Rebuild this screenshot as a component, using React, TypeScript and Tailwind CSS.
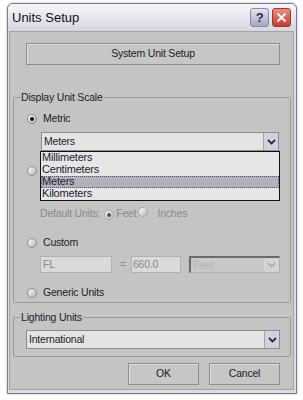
import React from 'react';

function Radio({ checked = false, disabled = false }: { checked?: boolean; disabled?: boolean }) {
  return (
    <span
      className={`inline-flex w-[10px] h-[10px] shrink-0 items-center justify-center rounded-full border bg-gradient-to-br from-white to-[#b4b4b4] ${
        disabled ? 'border-[#a8a8a8]' : 'border-[#8a8a8a]'
      }`}
    >
      {checked && <span className={`w-[4px] h-[4px] rounded-full ${disabled ? 'bg-[#555]' : 'bg-[#111]'}`} />}
    </span>
  );
}

function Chevron({ color = '#2a2a3a' }: { color?: string }) {
  return (
    <svg width="9" height="6" viewBox="0 0 9 6">
      <path d="M1 1 L4.5 4.5 L8 1" stroke={color} strokeWidth="1.8" fill="none" />
    </svg>
  );
}

function Select({ value }: { value: string }) {
  return (
    <div className="flex h-full border border-[#8c8c8c] bg-[#e4e4e4]">
      <span className="flex-1 pl-[2px] leading-[17px] text-[#1c1c28]">{value}</span>
      <span className="w-[15px] flex items-center justify-center border-l border-[#a4a4a4] bg-[#d2d2de]">
        <Chevron />
      </span>
    </div>
  );
}

function Button({ label, className }: { label: string; className: string }) {
  return (
    <div
      className={`h-[22px] flex items-center justify-center border border-[#8e8e8e] bg-[#c6c6c6] shadow-[inset_1px_1px_0_#dedede] text-[#1c1c28] ${className}`}
    >
      {label}
    </div>
  );
}

const itemsList = ['Millimeters', 'Centimeters', 'Meters', 'Kilometers'];

export default function App() {
  return (
    <div className="w-[303px] h-[400px] bg-white pt-[3px] pl-[7px] font-['Liberation_Sans',Arial,sans-serif] text-[10.5px] tracking-[-0.2px]">
      <div className="w-[290px] h-[391px] flex flex-col rounded-t-[6px] border border-[#7c7c86] bg-[#dcdce4] shadow-[0_0_2px_#9a9a9a]">
        {/* title bar */}
        <div className="h-[27px] flex items-center pl-[4px] pr-[5px] rounded-t-[5px] bg-gradient-to-b from-[#f6f6fa] to-[#d6d6e2]">
          <span className="flex-1 text-[13px] tracking-normal text-[#101010]">Units Setup</span>
          <div className="w-[19px] h-[19px] flex items-center justify-center rounded-[3px] border border-[#8a8aa0] bg-gradient-to-b from-[#e4e4f2] to-[#a6a6c4] text-[13px] font-bold text-[#2a2a40]">
            ?
          </div>
          <div className="ml-[3px] w-[19px] h-[19px] flex items-center justify-center rounded-[3px] border border-[#9a3a30] bg-gradient-to-b from-[#ee8a78] to-[#c83c2a]">
            <svg width="11" height="11" viewBox="0 0 11 11">
              <path d="M1.5 1.5 L9.5 9.5 M9.5 1.5 L1.5 9.5" stroke="#fff" strokeWidth="2" />
            </svg>
          </div>
        </div>

        {/* client */}
        <div className="ml-[1px] mr-[2px] mb-[3px] flex-1 flex flex-col border border-[#a4a4a4] bg-[#c4c4c4]">
          <Button label="System Unit Setup" className="ml-[16px] mt-[11px] w-[254px]" />

          {/* Display Unit Scale */}
          <div className="relative ml-[3px] mt-[32px] w-[278px] h-[206px] flex flex-col border border-[#999] rounded-[2px]">
            <span className="absolute -top-[8px] left-[6px] px-[1px] bg-[#c4c4c4] text-[#1c1c28]">Display Unit Scale</span>

            <div className="mt-[14px] ml-[13px] h-[14px] flex items-center gap-[6px] text-[#1c1c28]">
              <Radio checked />
              <span>Metric</span>
            </div>
            <div className="mt-[6px] ml-[27px] w-[238px] h-[19px]">
              <Select value="Meters" />
            </div>
            {/* US Standard option, mostly covered by the open list */}
            <div className="mt-[13px] ml-[13px] h-[14px] flex items-center">
              <Radio />
            </div>

            <div className="mt-[29px] ml-[26px] h-[14px] flex items-center text-[#8a8a8a]">
              <span>Default Units:</span>
              <span className="ml-[4px]"><Radio checked disabled /></span>
              <span className="ml-[2px]">Feet</span>
              <span className="ml-[2px]"><Radio disabled /></span>
              <span className="ml-[9px]">Inches</span>
            </div>

            <div className="mt-[15px] ml-[13px] h-[14px] flex items-center gap-[6px] text-[#1c1c28]">
              <Radio />
              <span>Custom</span>
            </div>
            <div className="mt-[6px] ml-[26px] h-[17px] flex items-center">
              <div className="w-[72px] h-full pl-[2px] leading-[15px] border border-[#b2b2b2] bg-[#dadada] text-[#8a8a8a]">FL</div>
              <span className="ml-[8px] text-[#8a8a8a]">=</span>
              <div className="ml-[5px] w-[50px] h-full pl-[1px] leading-[15px] border border-[#b2b2b2] bg-[#dadada] text-[#8a8a8a]">660.0</div>
              <div className="ml-[8px] w-[91px] h-full flex border-t-2 border-l-2 border-t-[#6a6a6a] border-l-[#6a6a6a] border-r border-b border-r-[#b0b0b0] border-b-[#b0b0b0] bg-[#c8c8c8]">
                <span className="flex-1 pl-[2px] leading-[14px] text-[#b4b4b4]">Feet</span>
                <span className="w-[15px] flex items-center justify-center bg-[#d4d4d4]">
                  <Chevron color="#b0b0b0" />
                </span>
              </div>
            </div>

            <div className="mt-[13px] ml-[13px] h-[14px] flex items-center gap-[6px] text-[#1c1c28]">
              <Radio />
              <span>Generic Units</span>
            </div>

            {/* open dropdown list */}
            <div className="absolute top-[53px] left-[26px] w-[240px] flex flex-col border border-[#111] bg-[#e6e6e6] text-[11px] text-[#1c1c30]">
              {itemsList.map((it) => (
                <div
                  key={it}
                  className={`h-[12px] leading-[11px] pl-[1px] ${
                    it === 'Meters' ? 'bg-[#b2b2be] outline-1 outline-dotted -outline-offset-1 outline-[#555]' : ''
                  }`}
                >
                  {it}
                </div>
              ))}
            </div>
          </div>

          {/* Lighting Units */}
          <div className="relative ml-[3px] mt-[14px] w-[278px] h-[40px] border border-[#999] rounded-[2px]">
            <span className="absolute -top-[8px] left-[6px] px-[1px] bg-[#c4c4c4] text-[#1c1c28]">Lighting Units</span>
            <div className="mt-[12px] ml-[12px] w-[254px] h-[19px]">
              <Select value="International" />
            </div>
          </div>

          <div className="mt-[6px] flex">
            <Button label="OK" className="ml-[118px] w-[71px]" />
            <Button label="Cancel" className="ml-[10px] w-[71px]" />
          </div>
        </div>
      </div>
    </div>
  );
}
